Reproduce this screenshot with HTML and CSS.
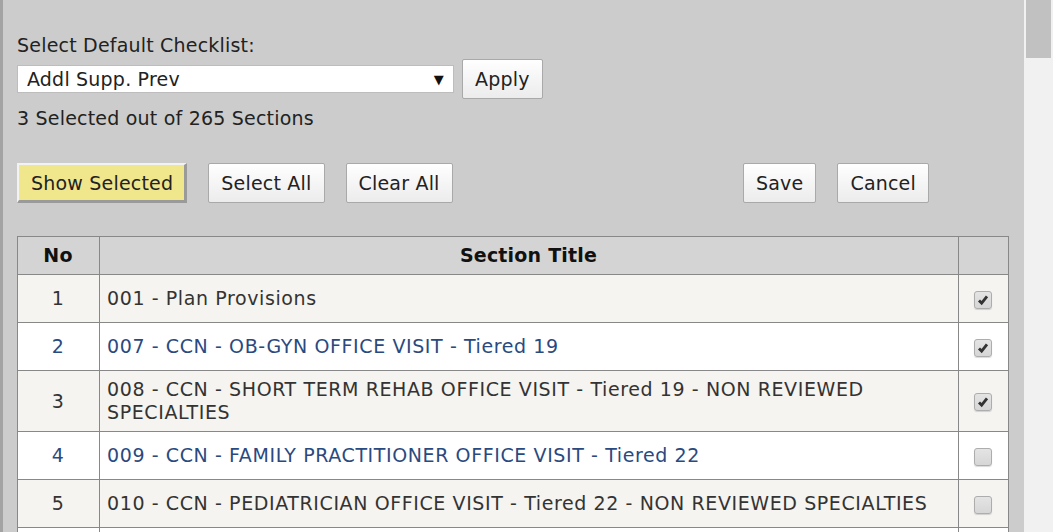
FILE: index.html
```html
<!DOCTYPE html>
<html lang="en">

<head>
    <meta charset="UTF-8">
    <title>Select Default Checklist</title>
    <link rel="stylesheet" href="styles.css">
</head>

<body>
    <div class="page">
        <!-- Main panel -->
        <div class="panel">
            <div class="label">Select Default Checklist:</div>
            <div class="checklist-row">
                <div class="select-box">
                    <span>Addl Supp. Prev</span>
                    <span class="arrow">&#9660;</span>
                </div>
                <button class="btn">Apply</button>
            </div>
            <div class="count">3 Selected out of 265 Sections</div>

            <!-- Toolbar -->
            <div class="toolbar">
                <button class="btn btn-active">Show Selected</button>
                <button class="btn">Select All</button>
                <button class="btn">Clear All</button>
                <div class="spacer"></div>
                <button class="btn">Save</button>
                <button class="btn">Cancel</button>
            </div>

            <!-- Sections table -->
            <table class="sections">
                <thead>
                    <tr>
                        <th class="col-no">No</th>
                        <th>Section Title</th>
                        <th class="col-check"></th>
                    </tr>
                </thead>
                <tbody>
                    <tr class="odd">
                        <td class="col-no">1</td>
                        <td class="title">001 - Plan Provisions</td>
                        <td class="col-check"><span class="check"><svg viewBox="0 0 18 18"><path d="M4.5 9.5 L7.5 12.5 L13.5 5" /></svg></span></td>
                    </tr>
                    <tr class="even">
                        <td class="col-no">2</td>
                        <td class="title">007 - CCN - OB-GYN OFFICE VISIT - Tiered 19</td>
                        <td class="col-check"><span class="check"><svg viewBox="0 0 18 18"><path d="M4.5 9.5 L7.5 12.5 L13.5 5" /></svg></span></td>
                    </tr>
                    <tr class="odd">
                        <td class="col-no">3</td>
                        <td class="title">008 - CCN - SHORT TERM REHAB OFFICE VISIT - Tiered 19 - NON REVIEWED SPECIALTIES</td>
                        <td class="col-check"><span class="check"><svg viewBox="0 0 18 18"><path d="M4.5 9.5 L7.5 12.5 L13.5 5" /></svg></span></td>
                    </tr>
                    <tr class="even">
                        <td class="col-no">4</td>
                        <td class="title">009 - CCN - FAMILY PRACTITIONER OFFICE VISIT - Tiered 22</td>
                        <td class="col-check"><span class="check"></span></td>
                    </tr>
                    <tr class="odd">
                        <td class="col-no">5</td>
                        <td class="title">010 - CCN - PEDIATRICIAN OFFICE VISIT - Tiered 22 - NON REVIEWED SPECIALTIES</td>
                        <td class="col-check"><span class="check"></span></td>
                    </tr>
                    <tr class="even">
                        <td class="col-no"></td>
                        <td></td>
                        <td class="col-check"></td>
                    </tr>
                </tbody>
            </table>
        </div>

        <!-- Scrollbar -->
        <div class="scroll-track">
            <div class="scroll-thumb"></div>
        </div>
    </div>
</body>

</html>
```

FILE: styles.css
```css
/* Base */
body {
    margin: 0;
    padding: 0;
    font-family: "DejaVu Sans", Verdana, sans-serif;
    font-size: 19px;
    letter-spacing: 0.2px;
    color: #222;
    overflow: hidden;
}

.page {
    display: flex;
    height: 532px;
    overflow: hidden;
}

/* Panel */
.panel {
    flex: 1;
    background-color: #cccccc;
    border-left: 3px solid #a3a3a3;
    padding: 33px 15px 0 14px;
}

.label {
    line-height: 24px;
}

.checklist-row {
    display: flex;
    align-items: center;
    gap: 8px;
    margin-top: 2px;
}

.select-box {
    width: 437px;
    height: 28px;
    box-sizing: border-box;
    background-color: white;
    border: 1px solid #bdbdbd;
    display: flex;
    align-items: center;
    justify-content: space-between;
    padding: 0 9px 0 9px;
}

.select-box .arrow {
    font-size: 13px;
    color: #111;
}

.count {
    margin-top: 7px;
    line-height: 24px;
}

/* Buttons */
.btn {
    font-family: inherit;
    font-size: 19px;
    letter-spacing: 0.2px;
    color: #222;
    height: 40px;
    padding: 0 12px;
    background: linear-gradient(#ffffff, #ececec);
    border: 1px solid #a9a9a9;
    border-radius: 2px;
    cursor: pointer;
}

.btn-active {
    background: #f0e68c;
    border-style: solid;
    border-width: 2px 3px 3px 2px;
    border-color: #f2f2f2 #9a9a9a #9a9a9a #f2f2f2;
    border-radius: 0;
    padding: 0 11px 0 12px;
}

.toolbar {
    display: flex;
    align-items: center;
    gap: 21px;
    margin-top: 33px;
    padding-right: 80px;
}

.spacer {
    flex: 1;
}

/* Table */
.sections {
    width: 100%;
    margin-top: 33px;
    border-collapse: collapse;
    border: 1px solid #888;
}

.sections th,
.sections td {
    border: 1px solid #888;
    padding: 7px 8px 7px 7px;
    line-height: 23px;
    text-align: left;
}

.sections th {
    background-color: #d4d4d4;
    color: #111;
    text-align: center;
    height: 23px;
}

.sections td.title {
    letter-spacing: 0.6px;
}

.sections tr {
    height: 48px;
}

.sections thead tr {
    height: 38px;
}

.sections tr.odd td {
    background-color: #f5f4f0;
    color: #333;
}

.sections tr.even td {
    background-color: #ffffff;
    color: #2a4a7f;
}

.sections .col-no {
    width: 66px;
    text-align: center;
}

.sections .col-check {
    width: 34px;
    text-align: center;
}

/* Checkbox */
.check {
    display: inline-block;
    width: 18px;
    height: 18px;
    box-sizing: border-box;
    border: 1px solid #adadad;
    border-radius: 3px;
    background: linear-gradient(#e4e4e4, #d6d6d6);
    vertical-align: middle;
    box-shadow: 0 1px 1px rgba(0, 0, 0, 0.15);
}

.check svg {
    display: block;
    width: 16px;
    height: 16px;
}

.check path {
    fill: none;
    stroke: #333;
    stroke-width: 3.2;
}

/* Scrollbar */
.scroll-track {
    width: 29px;
    background-color: #f1f1f1;
}

.scroll-thumb {
    height: 58px;
    margin: 0 2px;
    background-color: #c1c1c1;
}
```
